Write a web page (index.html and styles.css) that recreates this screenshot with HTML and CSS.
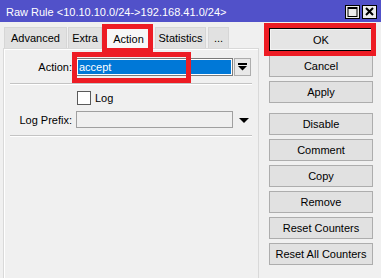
FILE: index.html
```html
<!doctype html>
<html lang="en">
    <head>
        <meta charset="UTF-8" />
        <title>Raw Rule</title>
        <link rel="stylesheet" href="styles.css">
    </head>
    <body>
        <div class="window">
            <div class="titlebar">
                <span class="title">Raw Rule &lt;10.10.10.0/24-&gt;192.168.41.0/24&gt;</span>
                <div class="winbtns">
                    <span class="winbtn">
                        <svg width="13" height="12" viewBox="0 0 13 12"><rect x="2" y="1.5" width="9" height="9" fill="none" stroke="#000" stroke-width="1"/><line x1="2" y1="2" x2="11" y2="2" stroke="#000" stroke-width="2"/></svg>
                    </span>
                    <span class="winbtn">
                        <svg width="13" height="12" viewBox="0 0 13 12"><path d="M3 2 L10 9 M10 2 L3 9" stroke="#000" stroke-width="2"/></svg>
                    </span>
                </div>
            </div>

            <div class="content">
                <div class="left">
                    <div class="tabs">
                        <span class="tab tab-advanced">Advanced</span>
                        <span class="tab tab-extra">Extra</span>
                        <span class="tab tab-action active mark">Action</span>
                        <span class="tab tab-stats">Statistics</span>
                        <span class="tab tab-more">...</span>
                    </div>

                    <div class="panel">
                        <div class="row row-action">
                            <label class="label">Action:</label>
                            <div class="field selected">accept<span class="field-mark"></span></div>
                            <span class="dropbtn">
                                <svg width="9" height="8" viewBox="0 0 9 8"><rect x="0" y="0" width="9" height="2" fill="#000"/><path d="M0 3 H9 L4.5 7.5 Z" fill="#000"/></svg>
                            </span>
                        </div>
                        <div class="sep"></div>
                        <div class="row row-check">
                            <span class="checkbox"></span>
                            <span class="check-text">Log</span>
                        </div>
                        <div class="row row-prefix">
                            <label class="label">Log Prefix:</label>
                            <div class="field disabled"></div>
                            <span class="droparrow">
                                <svg width="10" height="6" viewBox="0 0 10 6"><path d="M0 0 H10 L5 5 Z" fill="#000"/></svg>
                            </span>
                        </div>
                        <div class="sep sep-2"></div>
                    </div>
                </div>

                <div class="buttons">
                    <button class="btn ok mark">OK</button>
                    <button class="btn">Cancel</button>
                    <button class="btn">Apply</button>
                    <button class="btn group">Disable</button>
                    <button class="btn">Comment</button>
                    <button class="btn">Copy</button>
                    <button class="btn">Remove</button>
                    <button class="btn">Reset Counters</button>
                    <button class="btn">Reset All Counters</button>
                </div>
            </div>
        </div>
    </body>
</html>
```

FILE: styles.css
```css
html,
body {
    margin: 0;
    padding: 0;
    background: #f0f0f0;
}
body {
    font-family: "Liberation Sans", Arial, sans-serif;
    font-size: 11px;
    color: #000;
}
.window {
    width: 381px;
    height: 278px;
    display: flex;
    flex-direction: column;
    overflow: hidden;
    background: #f0f0f0;
}

/* title bar */
.titlebar {
    height: 22px;
    flex: none;
    background: #5151c9;
    display: flex;
    align-items: center;
    justify-content: space-between;
    padding: 0 4px 0 6px;
}
.title {
    color: #fff;
    font-size: 11px;
    margin-top: 1px;
}
.winbtns {
    display: flex;
    gap: 2px;
    margin-top: 1px;
}
.winbtn {
    width: 13px;
    height: 12px;
    border: 1px solid #000;
    background: #ececec;
    display: flex;
}

/* main area */
.content {
    flex: 1;
    display: flex;
}
.left {
    width: 259px;
    display: flex;
    flex-direction: column;
}
.tabs {
    display: flex;
    align-items: flex-end;
    height: 21px;
    margin-top: 5px;
    padding-left: 4px;
}
.tab {
    height: 21px;
    box-sizing: border-box;
    background: #e1e1e1;
    border: 1px solid #d6d6d6;
    border-bottom: none;
    display: flex;
    align-items: center;
    justify-content: center;
    margin-right: 1px;
}
.tab-advanced { width: 63px; }
.tab-extra { width: 34px; }
.tab-action { width: 49px; margin-left: 1px; margin-right: 2px; }
.tab-stats { width: 51px; margin-right: 2px; }
.tab-more { width: 21px; }
.tab.active {
    background: #f7f7f7;
    height: 22px;
    margin-bottom: -1px;
    position: relative;
    z-index: 1;
}

/* red highlight frames drawn over the controls */
.mark {
    position: relative;
}
.tab.mark::after,
.btn.mark::after,
.field-mark {
    content: "";
    position: absolute;
    box-sizing: border-box;
    border: 5px solid #ed1c24;
    pointer-events: none;
}
.tab.mark::after {
    top: -4px;
    left: -3px;
    right: -1px;
    bottom: -4px;
}
.btn.mark::after {
    top: -6px;
    left: -6px;
    right: -4px;
    bottom: -6px;
}
.field-mark {
    left: -5px;
    top: -7px;
    width: 119px;
    height: 31px;
}

.panel {
    flex: 1;
    margin-left: 3px;
    width: 256px;
    box-sizing: border-box;
    border: 1px solid #d9d9d9;
    border-bottom: none;
    box-shadow: inset 1px 1px 0 #fff;
    background: #f0f0f0;
    display: flex;
    flex-direction: column;
}
.row {
    display: flex;
    align-items: center;
}
.row-action {
    margin-top: 9px;
    height: 18px;
}
.row-check {
    margin-top: 6px;
    height: 13px;
    padding-left: 73px;
}
.row-prefix {
    margin-top: 7px;
    height: 17px;
}
.label {
    width: 68px;
    text-align: right;
    margin-right: 4px;
    flex: none;
}
.field {
    width: 157px;
    height: 100%;
    box-sizing: border-box;
    border: 1px solid #a0a0a0;
    display: flex;
    align-items: center;
    padding-left: 2px;
    position: relative;
}
.field.selected {
    background: #0078d7;
    color: #fff;
    box-shadow: inset 0 0 0 1px #fff;
    border-color: #7a7a7a;
}
.field.disabled {
    background: #f0f0f0;
}
.dropbtn {
    width: 17px;
    height: 18px;
    box-sizing: border-box;
    margin-left: 1px;
    border: 1px solid #adadad;
    background: #e8e8e8;
    display: flex;
    align-items: center;
    justify-content: center;
}
.droparrow {
    margin-left: 6px;
    margin-top: 2px;
    display: flex;
}
.checkbox {
    width: 12px;
    height: 12px;
    border: 1px solid #5a5a5a;
    background: #fff;
    margin-right: 4px;
}
.sep {
    height: 1px;
    margin: 7px 6px 0;
    background: #c4c4c4;
    border-bottom: 1px solid #fff;
}

/* right hand buttons */
.buttons {
    width: 104px;
    margin-left: 10px;
    margin-top: 6px;
    display: flex;
    flex-direction: column;
    gap: 4px;
}
.btn {
    height: 22px;
    box-sizing: border-box;
    border: 1px solid #adadad;
    background: #e1e1e1;
    font-family: inherit;
    font-size: 11px;
    color: #000;
    padding: 0;
}
.btn.ok {
    height: 23px;
    border: 1px solid #000;
    background: #e5e5e5;
    box-shadow: inset 0 0 0 1px #f4f4f4;
}
.btn.group {
    margin-top: 6px;
}
```
